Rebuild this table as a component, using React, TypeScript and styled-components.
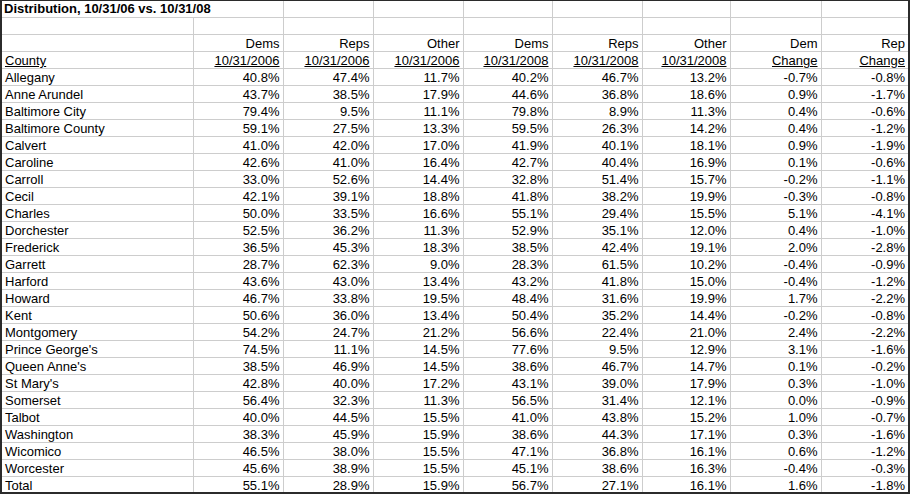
import React from "react";
import styled, { createGlobalStyle } from "styled-components";

const GlobalStyle = createGlobalStyle`
  html, body {
    margin: 0;
    padding: 0;
    background: #ffffff;
  }
`;

const Sheet = styled.div`
  width: 910px;
  height: 494px;
  box-sizing: border-box;
  border-top: 1px solid #2b2b2b;
  border-left: 2px solid #2b2b2b;
  border-right: 2px solid #2b2b2b;
  border-bottom: 2px solid #2b2b2b;
  overflow: hidden;
  background: #ffffff;
`;

const Grid = styled.table`
  border-collapse: collapse;
  table-layout: fixed;
  width: 906px;
  font-family: "Liberation Sans", Arial, sans-serif;
  font-size: 13px;
  color: #000;
`;

const Row = styled.tr<{ $title?: boolean }>`
  height: ${p => (p.$title ? "16px" : "17px")};
`;

const Cell = styled.td<{ $left?: boolean; $under?: boolean }>`
  box-sizing: border-box;
  padding: 0 3px 0 3px;
  border: 1px solid #cdcdcd;
  border-top: none;
  text-align: ${p => (p.$left ? "left" : "right")};
  text-decoration: ${p => (p.$under ? "underline" : "none")};
  vertical-align: bottom;
  line-height: 15px;
  white-space: nowrap;
  overflow: hidden;
  &:first-child {
    border-left: none;
  }
  &:last-child {
    border-right: none;
  }
`;

const TitleCell = styled(Cell)`
  font-weight: bold;
  padding-left: 2px;
  padding-bottom: 1px;
`;

const widths = [191, 90, 90, 90, 89, 90, 88, 91, 87];

const tops = ["Dems", "Reps", "Other", "Dems", "Reps", "Other", "Dem", "Rep"];
const subs = [
  "10/31/2006",
  "10/31/2006",
  "10/31/2006",
  "10/31/2008",
  "10/31/2008",
  "10/31/2008",
  "Change",
  "Change"
];

const data: string[][] = [
  ["Allegany", "40.8%", "47.4%", "11.7%", "40.2%", "46.7%", "13.2%", "-0.7%", "-0.8%"],
  ["Anne Arundel", "43.7%", "38.5%", "17.9%", "44.6%", "36.8%", "18.6%", "0.9%", "-1.7%"],
  ["Baltimore City", "79.4%", "9.5%", "11.1%", "79.8%", "8.9%", "11.3%", "0.4%", "-0.6%"],
  ["Baltimore County", "59.1%", "27.5%", "13.3%", "59.5%", "26.3%", "14.2%", "0.4%", "-1.2%"],
  ["Calvert", "41.0%", "42.0%", "17.0%", "41.9%", "40.1%", "18.1%", "0.9%", "-1.9%"],
  ["Caroline", "42.6%", "41.0%", "16.4%", "42.7%", "40.4%", "16.9%", "0.1%", "-0.6%"],
  ["Carroll", "33.0%", "52.6%", "14.4%", "32.8%", "51.4%", "15.7%", "-0.2%", "-1.1%"],
  ["Cecil", "42.1%", "39.1%", "18.8%", "41.8%", "38.2%", "19.9%", "-0.3%", "-0.8%"],
  ["Charles", "50.0%", "33.5%", "16.6%", "55.1%", "29.4%", "15.5%", "5.1%", "-4.1%"],
  ["Dorchester", "52.5%", "36.2%", "11.3%", "52.9%", "35.1%", "12.0%", "0.4%", "-1.0%"],
  ["Frederick", "36.5%", "45.3%", "18.3%", "38.5%", "42.4%", "19.1%", "2.0%", "-2.8%"],
  ["Garrett", "28.7%", "62.3%", "9.0%", "28.3%", "61.5%", "10.2%", "-0.4%", "-0.9%"],
  ["Harford", "43.6%", "43.0%", "13.4%", "43.2%", "41.8%", "15.0%", "-0.4%", "-1.2%"],
  ["Howard", "46.7%", "33.8%", "19.5%", "48.4%", "31.6%", "19.9%", "1.7%", "-2.2%"],
  ["Kent", "50.6%", "36.0%", "13.4%", "50.4%", "35.2%", "14.4%", "-0.2%", "-0.8%"],
  ["Montgomery", "54.2%", "24.7%", "21.2%", "56.6%", "22.4%", "21.0%", "2.4%", "-2.2%"],
  ["Prince George's", "74.5%", "11.1%", "14.5%", "77.6%", "9.5%", "12.9%", "3.1%", "-1.6%"],
  ["Queen Anne's", "38.5%", "46.9%", "14.5%", "38.6%", "46.7%", "14.7%", "0.1%", "-0.2%"],
  ["St Mary's", "42.8%", "40.0%", "17.2%", "43.1%", "39.0%", "17.9%", "0.3%", "-1.0%"],
  ["Somerset", "56.4%", "32.3%", "11.3%", "56.5%", "31.4%", "12.1%", "0.0%", "-0.9%"],
  ["Talbot", "40.0%", "44.5%", "15.5%", "41.0%", "43.8%", "15.2%", "1.0%", "-0.7%"],
  ["Washington", "38.3%", "45.9%", "15.9%", "38.6%", "44.3%", "17.1%", "0.3%", "-1.6%"],
  ["Wicomico", "46.5%", "38.0%", "15.5%", "47.1%", "36.8%", "16.1%", "0.6%", "-1.2%"],
  ["Worcester", "45.6%", "38.9%", "15.5%", "45.1%", "38.6%", "16.3%", "-0.4%", "-0.3%"],
  ["Total", "55.1%", "28.9%", "15.9%", "56.7%", "27.1%", "16.1%", "1.6%", "-1.8%"]
];

const App = () => {
  return (
    <>
      <GlobalStyle />
      <Sheet>
        <Grid>
          <colgroup>
            {widths.map((w, i) => (
              <col key={i} style={{ width: w }} />
            ))}
          </colgroup>
          <tbody>
            <Row $title>
              <TitleCell $left colSpan={2}>
                Distribution, 10/31/06 vs. 10/31/08
              </TitleCell>
              {tops.slice(1).map((_, i) => (
                <Cell key={i} />
              ))}
            </Row>
            <Row>
              {widths.map((_, i) => (
                <Cell key={i} />
              ))}
            </Row>
            <Row>
              <Cell $left />
              {tops.map((t, i) => (
                <Cell key={i}>{t}</Cell>
              ))}
            </Row>
            <Row>
              <Cell $left $under>
                County
              </Cell>
              {subs.map((s, i) => (
                <Cell key={i} $under>
                  {s}
                </Cell>
              ))}
            </Row>
            {data.map(row => (
              <Row key={row[0]}>
                <Cell $left>{row[0]}</Cell>
                {row.slice(1).map((v, i) => (
                  <Cell key={i}>{v}</Cell>
                ))}
              </Row>
            ))}
          </tbody>
        </Grid>
      </Sheet>
    </>
  );
};

export default App;
